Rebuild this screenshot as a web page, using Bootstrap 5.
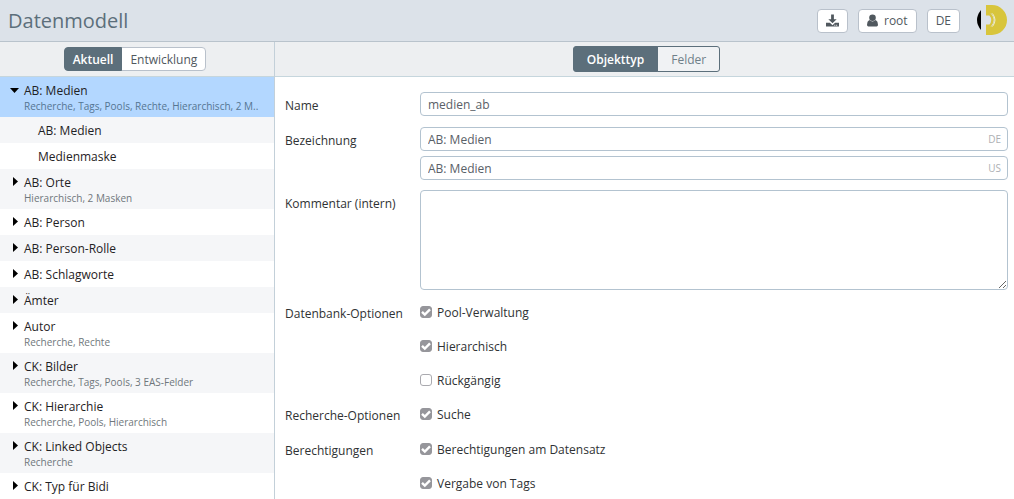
<!DOCTYPE html>
<html lang="de">
<head>
<meta charset="utf-8">
<meta name="viewport" content="width=device-width, initial-scale=1">
<title>Datenmodell</title>
<link href="https://cdn.jsdelivr.net/npm/bootstrap@5.3.0/dist/css/bootstrap.min.css" rel="stylesheet">
<style>
  :root { --slate: #5c6f7b; }
  body { font-family: "Open Sans", "Noto Sans", sans-serif; font-size: 12px; line-height: 18px; color: #2f3234; }
  .topbar { height: 42px; background: #dce2e9; border-bottom: 1px solid #b9c3cc; }
  .topbar h1 { font-size: 20px; line-height: 26px; color: var(--slate); font-weight: 400; }
  .topbar-actions { gap: 10px; }
  .logo { margin: 0 6px; }
  .toolbar { height: 35px; background: #edeff1; border-bottom: 1px solid #c6d6dd; }
  .sidebar { width: 275px; border-right: 1px solid #c3d0d9; }
  .btn { --bs-btn-font-size: 12px; --bs-btn-line-height: 18px; --bs-btn-padding-y: 2px; --bs-btn-padding-x: 8px; --bs-btn-border-radius: 4px;
    --bs-btn-color: #50585e; --bs-btn-bg: #fff; --bs-btn-border-color: #b9c1cb; }
  .btn.active { --bs-btn-active-bg: var(--slate); --bs-btn-active-border-color: var(--slate); --bs-btn-active-color: #fff; font-weight: 600; }
  .user-button { gap: 6px; }
  .btn-group .btn { padding-top: 3px; padding-bottom: 1px; }
  .view-switch .btn { --bs-btn-bg: #f0f2f4; --bs-btn-border-color: var(--slate); --bs-btn-color: #6f7f89; --bs-btn-padding-x: 13px; --bs-btn-border-radius: 3px; padding-top: 4px; padding-bottom: 2px; }
  .tree a { display: grid; grid-template-columns: 14px minmax(0, 1fr); padding: 5px 8px 3px 10px; color: #1f2224; text-decoration: none; }
  .tree li:nth-child(even) a { background: #f5f6f8; }
  .tree li:nth-child(1) a { background: #b3d7ff; }
  .tree .meta { grid-column: 2; font-size: 10px; line-height: 12px; padding-bottom: 2px; color: #6f777c; white-space: nowrap; }
  .tree li:nth-child(1) .meta { color: #557592; }
  .tree .child { padding-left: 24px; }
  .tree .child span { grid-column: 2; }
  .tree svg { width: 9px; height: 18px; }
  .model-form { display: grid; row-gap: 10px; padding: 15px 6px 0 10px; }
  .form-line { display: grid; grid-template-columns: 125px minmax(0, 1fr); column-gap: 10px; min-height: 25px; align-items: start; }
  .line-label { padding-top: 2px; line-height: 23px; white-space: nowrap; }
  .translations { row-gap: 5px; }
  .form-control { font-size: 12px; line-height: 18px; padding: 3px 7px 1px; border-color: #b3c3d0; border-radius: 4px; color: #596067; min-height: 24px; }
  textarea.form-control { height: 100px; }
  .lang { position: absolute; right: 7px; top: 3px; font-size: 10px; color: #adb0b4; }
  .options { row-gap: 10px; }
  .option { height: 24px; gap: 5px; }
  .option label { padding-top: 2px; }
  .form-check-input { width: 12px; height: 12px; border: 1px solid #aaaaaf; border-radius: 2px; }
  .form-check-input:checked { background-color: #96969b; border-color: #96969b; background-size: 12px;
    background-image: url("data:image/svg+xml,%3csvg xmlns='http://www.w3.org/2000/svg' viewBox='0 0 12 12'%3e%3cpath fill='none' stroke='%23fff' stroke-width='2.4' d='M2 5.800 4.800 8.500 10 3.300'/%3e%3c/svg%3e"); }
</style>
</head>
<body class="vh-100 overflow-hidden d-flex flex-column">
<header class="topbar d-flex align-items-center flex-shrink-0 ps-2">
  <h1 class="m-0 me-auto">Datenmodell</h1>
  <div class="topbar-actions d-flex align-items-center">
    <button class="btn" type="button" aria-label="Herunterladen"><svg class="d-block" width="13" height="18" viewBox="0 0 14 18" fill="#50585e"><path d="M5.500 2h3v5h3L7 11.500 2.500 7h3z"/><path d="M0 11h4.200L7 13.500 9.800 11H14v4H0z"/><path fill="#fff" d="M9 13h1v1H9zM11 13h1v1h-1z"/></svg></button>
    <button class="btn user-button d-flex align-items-center" type="button"><svg width="11" height="13" viewBox="0 0 12 14" fill="#50585e"><circle cx="6" cy="4" r="3.600"/><path d="M2.500 6.500Q6 9.500 9.500 6.500 12 8 12 11.500 12 13.500 10.500 13.500h-9Q0 13.500 0 11.500 0 8 2.500 6.500z"/></svg>root</button>
    <button class="btn" type="button">DE</button>
    <svg class="logo" width="32" height="32" viewBox="0 0 32 32" role="img" aria-label="Logo"><path d="M5 5Q-3 15 5 25z"/><path fill="#d8c53c" d="M10 0h6a15 15 0 0 1 0 30h-6v-8h5q7-7 0-14h-5z"/><path fill="none" stroke="#d8c53c" stroke-width="2.400" d="M10 9.200h4q5 5.800 0 11.600h-4"/><path fill="none" stroke="#f0ecc8" d="M16.500 8.500q5 6.500 0 13"/></svg>
  </div>
</header>
<main class="d-flex flex-grow-1 overflow-hidden">
  <aside class="sidebar flex-shrink-0">
    <div class="toolbar d-flex align-items-center justify-content-center pe-1">
      <div class="btn-group" role="group" aria-label="Version"><button class="btn active" type="button">Aktuell</button><button class="btn" type="button">Entwicklung</button></div>
    </div>
    <ul class="tree list-unstyled m-0">
      <li><a href="#"><svg viewBox="0 0 9 18"><path d="M0 6h9L4.500 11z"/></svg><span>AB: Medien</span><span class="meta">Recherche, Tags, Pools, Rechte, Hierarchisch, 2 M..</span></a></li>
      <li><a href="#" class="child"><span>AB: Medien</span></a></li>
      <li><a href="#" class="child"><span>Medienmaske</span></a></li>
      <li><a href="#"><svg viewBox="0 0 9 18"><path d="M3 3v9l5-4.500z"/></svg><span>AB: Orte</span><span class="meta">Hierarchisch, 2 Masken</span></a></li>
      <li><a href="#"><svg viewBox="0 0 9 18"><path d="M3 3v9l5-4.500z"/></svg><span>AB: Person</span></a></li>
      <li><a href="#"><svg viewBox="0 0 9 18"><path d="M3 3v9l5-4.500z"/></svg><span>AB: Person-Rolle</span></a></li>
      <li><a href="#"><svg viewBox="0 0 9 18"><path d="M3 3v9l5-4.500z"/></svg><span>AB: Schlagworte</span></a></li>
      <li><a href="#"><svg viewBox="0 0 9 18"><path d="M3 3v9l5-4.500z"/></svg><span>Ämter</span></a></li>
      <li><a href="#"><svg viewBox="0 0 9 18"><path d="M3 3v9l5-4.500z"/></svg><span>Autor</span><span class="meta">Recherche, Rechte</span></a></li>
      <li><a href="#"><svg viewBox="0 0 9 18"><path d="M3 3v9l5-4.500z"/></svg><span>CK: Bilder</span><span class="meta">Recherche, Tags, Pools, 3 EAS-Felder</span></a></li>
      <li><a href="#"><svg viewBox="0 0 9 18"><path d="M3 3v9l5-4.500z"/></svg><span>CK: Hierarchie</span><span class="meta">Recherche, Pools, Hierarchisch</span></a></li>
      <li><a href="#"><svg viewBox="0 0 9 18"><path d="M3 3v9l5-4.500z"/></svg><span>CK: Linked Objects</span><span class="meta">Recherche</span></a></li>
      <li><a href="#"><svg viewBox="0 0 9 18"><path d="M3 3v9l5-4.500z"/></svg><span>CK: Typ für Bidi</span></a></li>
    </ul>
  </aside>
  <section class="flex-grow-1">
    <div class="toolbar d-flex align-items-center justify-content-center ps-1">
      <div class="btn-group view-switch" role="group" aria-label="Ansicht"><button class="btn active" type="button">Objekttyp</button><button class="btn" type="button">Felder</button></div>
    </div>
    <form class="model-form">
      <div class="form-line"><label class="line-label" for="name">Name</label><input class="form-control" type="text" id="name" value="medien_ab"></div>
      <div class="form-line"><label class="line-label" for="title-de">Bezeichnung</label>
        <div class="translations d-grid">
          <div class="position-relative"><input class="form-control" type="text" id="title-de" value="AB: Medien"><span class="lang">DE</span></div>
          <div class="position-relative"><input class="form-control" type="text" aria-label="Bezeichnung US" value="AB: Medien"><span class="lang">US</span></div>
        </div>
      </div>
      <div class="form-line"><label class="line-label" for="comment">Kommentar (intern)</label><textarea class="form-control" id="comment"></textarea></div>
      <div class="form-line" role="group" aria-labelledby="db-options"><span class="line-label" id="db-options">Datenbank-Optionen</span>
        <div class="options d-grid">
          <div class="option d-flex align-items-center"><input class="form-check-input m-0" type="checkbox" id="pool" checked><label for="pool">Pool-Verwaltung</label></div>
          <div class="option d-flex align-items-center"><input class="form-check-input m-0" type="checkbox" id="hierarchy" checked><label for="hierarchy">Hierarchisch</label></div>
          <div class="option d-flex align-items-center"><input class="form-check-input m-0" type="checkbox" id="undo"><label for="undo">Rückgängig</label></div>
        </div>
      </div>
      <div class="form-line" role="group" aria-labelledby="search-options"><span class="line-label" id="search-options">Recherche-Optionen</span>
        <div class="option d-flex align-items-center"><input class="form-check-input m-0" type="checkbox" id="search" checked><label for="search">Suche</label></div>
      </div>
      <div class="form-line" role="group" aria-labelledby="rights"><span class="line-label" id="rights">Berechtigungen</span>
        <div class="options d-grid">
          <div class="option d-flex align-items-center"><input class="form-check-input m-0" type="checkbox" id="record-rights" checked><label for="record-rights">Berechtigungen am Datensatz</label></div>
          <div class="option d-flex align-items-center"><input class="form-check-input m-0" type="checkbox" id="tags" checked><label for="tags">Vergabe von Tags</label></div>
        </div>
      </div>
    </form>
  </section>
</main>
<script src="https://cdn.jsdelivr.net/npm/bootstrap@5.3.0/dist/js/bootstrap.bundle.min.js"></script>
</body>
</html>
